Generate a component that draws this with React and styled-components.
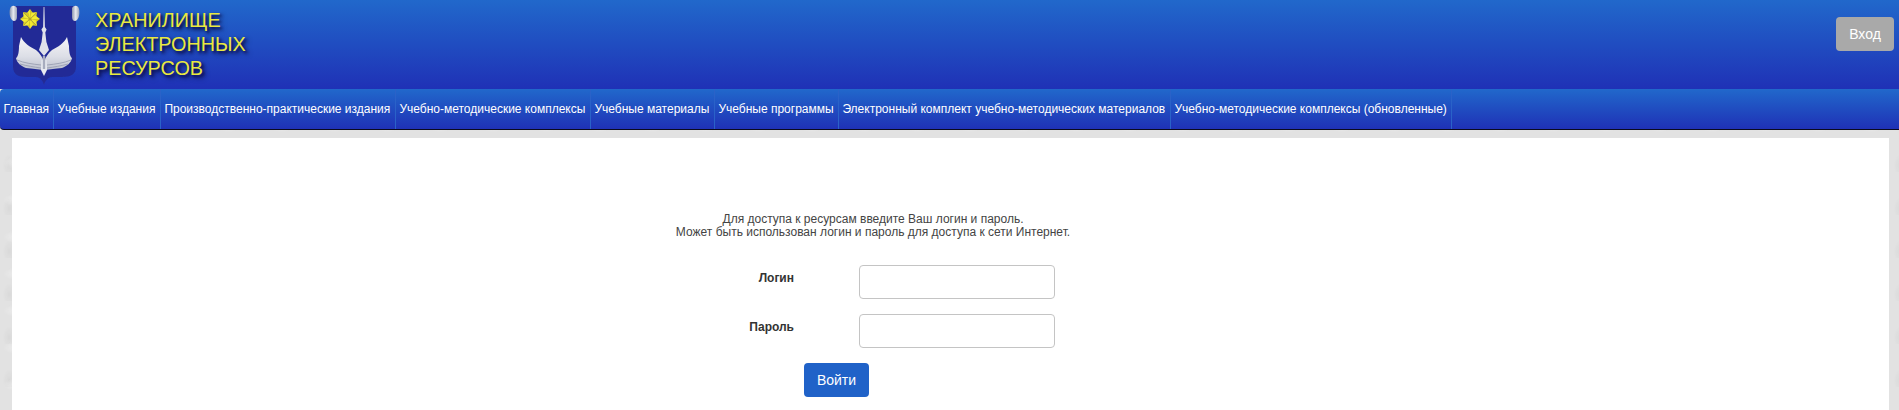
import React from "react";
import styled, { createGlobalStyle } from "styled-components";

const Global = createGlobalStyle`
  html, body { margin: 0; padding: 0; height: 410px; overflow: hidden; }
  body {
    background-color: #e2e2e2;
    background-image:
      radial-gradient(ellipse 18px 9px at 30% 40%, rgba(255,255,255,0.35), transparent 70%),
      radial-gradient(ellipse 14px 7px at 70% 70%, rgba(0,0,0,0.05), transparent 70%),
      radial-gradient(ellipse 9px 16px at 15% 85%, rgba(0,0,0,0.04), transparent 70%),
      radial-gradient(ellipse 11px 6px at 85% 20%, rgba(255,255,255,0.3), transparent 70%);
    background-size: 53px 37px, 47px 31px, 61px 43px, 41px 29px;
    font-family: "Liberation Sans", Arial, sans-serif;
    color: #333;
    font-size: 12px;
  }
  * { box-sizing: border-box; }
`;

const blueGradient = "linear-gradient(to bottom, #2168cb 0%, #1f31b6 100%)";

const Header = styled.header`
  height: 89px;
  background: ${blueGradient};
  display: flex;
  align-items: flex-start;
  justify-content: space-between;
`;
const Brand = styled.div`
  display: flex;
  align-items: flex-start;
`;
const Emblem = styled.svg`
  width: 90px;
  height: 89px;
  display: block;
  flex: none;
`;
const Title = styled.div`
  margin: 8px 0 0 5px;
  font-size: 19.8px;
  line-height: 24px;
  color: #e9e940;
  text-shadow: 2px 2px 3px #0b0b45, 3px 3px 5px rgba(10, 10, 60, 0.7);
`;
const EnterButton = styled.button`
  margin: 17px 5px 0 0;
  width: 58px;
  height: 34px;
  border: 0;
  border-radius: 4px;
  background: #a9a9a9;
  color: #fff;
  font: 14px "Liberation Sans", Arial, sans-serif;
`;
const Nav = styled.nav`
  height: 41px;
  background: ${blueGradient};
  border-bottom: 1px solid #0a0a1e;
  border-radius: 4px 0 0 4px;
  display: flex;
`;
const NavItem = styled.a`
  display: flex;
  align-items: center;
  padding: 0 0 0 3.4px;
  height: 40px;
  font-size: 12px;
  color: #fff;
  border-right: 1px solid #2a62c8;
  white-space: nowrap;
`;
const Page = styled.main`
  margin: 8px 10px 0 12px;
  height: 280px;
  background: #fff;
  padding: 75px 0 0 664px;
`;
const Intro = styled.p`
  margin: 0 0 0 -1px;
  width: 396px;
  text-align: center;
  font-size: 12px;
  line-height: 13px;
  color: #444;
`;
const Form = styled.form`
  margin: 26px 0 0 0;
`;
const Row = styled.div`
  display: grid;
  grid-template-columns: 118px 196px;
  column-gap: 65px;
  height: 34px;
  margin-bottom: 15px;
`;
const Label = styled.label`
  justify-self: end;
  padding-top: 6px;
  font-weight: 700;
  font-size: 12px;
  line-height: 14px;
  color: #333;
`;
const Input = styled.input`
  width: 196px;
  height: 34px;
  border: 1px solid #c4c4c4;
  border-radius: 4px;
  background: #fff;
`;
const Submit = styled.button`
  display: block;
  margin: 0 0 0 128px;
  width: 65px;
  height: 34px;
  border: 0;
  border-radius: 4px;
  background: #2062c8;
  color: #fff;
  font: 14px "Liberation Sans", Arial, sans-serif;
`;

const items = [
  ["Главная", 54],
  ["Учебные издания", 107],
  ["Производственно-практические издания", 235],
  ["Учебно-методические комплексы", 195],
  ["Учебные материалы", 124],
  ["Учебные программы", 124],
  ["Электронный комплект учебно-методических материалов", 332],
  ["Учебно-методические комплексы (обновленные)", 281],
];

const petals = [0, 45, 90, 135, 180, 225, 270, 315];

function Logo() {
  return (
    <Emblem viewBox="0 0 90 89" aria-hidden="true">
      <defs>
        <linearGradient id="wing" x1="0" y1="0" x2="0" y2="1">
          <stop offset="0" stopColor="#f6f6f8" />
          <stop offset="0.6" stopColor="#dcdee6" />
          <stop offset="1" stopColor="#bcc0ce" />
        </linearGradient>
        <linearGradient id="scroll" x1="0" y1="0" x2="1" y2="0">
          <stop offset="0" stopColor="#8d95ad" />
          <stop offset="0.5" stopColor="#e8eaf0" />
          <stop offset="1" stopColor="#9aa2b8" />
        </linearGradient>
        <filter id="soft" x="-5%" y="-5%" width="110%" height="110%">
          <feGaussianBlur stdDeviation="0.35" />
        </filter>
      </defs>
      <g filter="url(#soft)">
        <path d="M13 6 H76 V67 C76 74 71 77 62 77 H52 C48 77 45 81 44 85 C43 81 40 77 36 77 H26 C18 77 13 74 13 67 Z" fill="#232c96" />
        <path d="M10 9 C11 5 15 5 17 8 V17 C17 21 14 22 12 20 C10 18 9 13 10 9 Z" fill="url(#scroll)" />
        <path d="M79 9 C78 5 74 5 72 8 V17 C72 21 75 22 77 20 C79 18 80 13 79 9 Z" fill="url(#scroll)" />
        {petals.map((angle) => (
          <g key={angle} transform={`rotate(${angle} 30 19)`}>
            <path d="M30 19 L26.6 13.5 L30 9 Z" fill="#f2ea30" />
            <path d="M30 19 L33.4 13.5 L30 9 Z" fill="#d6c828" />
          </g>
        ))}
        <circle cx="30" cy="19" r="1.6" fill="#b3a526" />
        <path d="M43.6 7 H44.4 L44.9 27 L46.6 29.5 L45.3 32.5 L46.4 42 L49 50 L44 56 L39 50 L41.6 42 L42.7 32.5 L41.4 29.5 L43.1 27 Z" fill="#dfe2ea" />
        <path d="M21 37 C24 43 30 47 36 50 C40 53 42 57 44 61 L43 70 C38 69 33 69 26 68 C21 66 17 63 16 58 C18 57 19 52 19 46 Z" fill="url(#wing)" />
        <path d="M67 37 C64 43 58 47 52 50 C48 53 46 57 44 61 L45 70 C50 69 55 69 62 68 C67 66 71 63 72 58 C70 57 69 52 69 46 Z" fill="url(#wing)" />
        <path d="M41.5 60 H46.5 L47 70 L44 76 L41 70 Z" fill="#e9ebf1" />
        <path d="M42.8 56 H45.2 V69 H42.8 Z" fill="#a7acbe" />
        <path d="M17 60 C24 63 32 64 41 65 M20 64 C27 66 34 67 41 68 M71 60 C64 63 56 64 47 65 M68 64 C61 66 54 67 47 68" stroke="#8d92a8" strokeWidth="0.7" fill="none" />
      </g>
    </Emblem>
  );
}

export default function App() {
  return (
    <>
      <Global />
      <Header>
        <Brand>
          <Logo />
          <Title>
            ХРАНИЛИЩЕ
            <br />
            ЭЛЕКТРОННЫХ
            <br />
            РЕСУРСОВ
          </Title>
        </Brand>
        <EnterButton>Вход</EnterButton>
      </Header>
      <Nav>
        {items.map(([label, width]) => (
          <NavItem key={label} style={{ width }}>
            {label}
          </NavItem>
        ))}
      </Nav>
      <Page>
        <Intro>
          Для доступа к ресурсам введите Ваш логин и пароль.
          <br />
          Может быть использован логин и пароль для доступа к сети Интернет.
        </Intro>
        <Form>
          <Row>
            <Label>Логин</Label>
            <Input type="text" />
          </Row>
          <Row>
            <Label>Пароль</Label>
            <Input type="password" />
          </Row>
          <Submit type="button">Войти</Submit>
        </Form>
      </Page>
    </>
  );
}
